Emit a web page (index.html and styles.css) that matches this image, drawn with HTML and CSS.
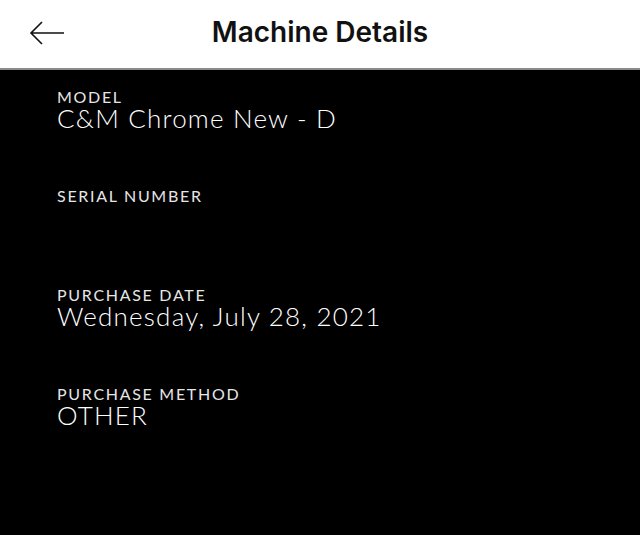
FILE: index.html
```html
<!DOCTYPE html>
<html lang="en">
<head>
    <meta charset="UTF-8">
    <meta name="viewport" content="width=device-width, initial-scale=1.0">
    <title>Machine Details</title>
    <link rel="stylesheet" href="styles.css">
</head>
<body>
    <div class="header">
        <button class="back-button" aria-label="Back">
            <svg width="36" height="24" viewBox="0 0 36 24">
                <path d="M35 12H2M13 1L2 12l11 11" fill="none" stroke="#111" stroke-width="1.6" stroke-linejoin="miter"/>
            </svg>
        </button>
        <h1>Machine Details</h1>
    </div>

    <div class="details">
        <div class="field">
            <p class="label">MODEL</p>
            <p class="value">C&amp;M Chrome New - D</p>
        </div>
        <div class="field">
            <p class="label">SERIAL NUMBER</p>
            <p class="value"></p>
        </div>
        <div class="field">
            <p class="label">PURCHASE DATE</p>
            <p class="value">Wednesday, July 28, 2021</p>
        </div>
        <div class="field">
            <p class="label">PURCHASE METHOD</p>
            <p class="value">OTHER</p>
        </div>
    </div>
</body>
</html>
```

FILE: styles.css
```css
body {
    margin: 0;
    background-color: black;
    color: white;
    font-family: 'Lato', sans-serif;
    height: 100vh;
}
.header {
    background-color: white;
    color: #111;
    height: 68px;
    border-bottom: 2px solid #8a8a8a;
    display: flex;
    align-items: center;
    justify-content: center;
    position: relative;
}
.header h1 {
    font-family: 'Inter', sans-serif;
    font-size: 28px;
    font-weight: 600;
    margin: 0;
    margin-top: -4px;
}
.back-button {
    position: absolute;
    left: 29px;
    top: 21px;
    background: none;
    border: none;
    padding: 0;
    cursor: pointer;
}
.back-button svg {
    display: block;
}
.details {
    padding: 18px 57px;
}
.field {
    height: 99px;
}
.label {
    margin: 0;
    font-size: 16px;
    line-height: 17px;
    letter-spacing: 1.7px;
    font-weight: 400;
    color: #e6e6e6;
}
.value {
    margin: 0;
    font-size: 26px;
    line-height: 26px;
    letter-spacing: 1.2px;
    font-weight: 300;
    min-height: 26px;
}
```
